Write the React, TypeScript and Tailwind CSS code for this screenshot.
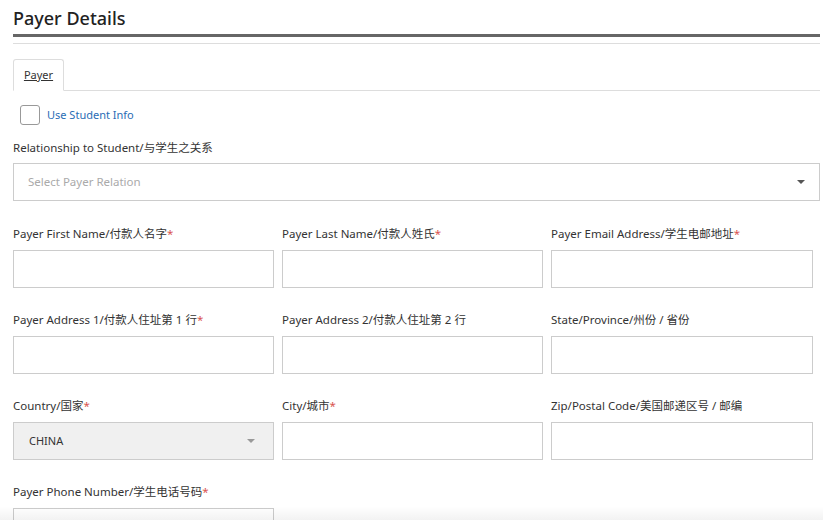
import React from "react";

const Req = () => <span className="text-[#d9534f]">*</span>;

function Field({ label, req, children }: { label: string; req?: boolean; children?: React.ReactNode }) {
  return (
    <div className="flex flex-col">
      <div className="h-[16px] text-[11.5px] leading-[16px] text-[#333]">{label}{req && <Req />}</div>
      <div className="mt-[8px]">
        {children ?? <div className="h-[38px] border border-[#ccc] bg-white" />}
      </div>
    </div>
  );
}

export default function App() {
  return (
    <div className="w-[823px] h-[520px] overflow-hidden bg-white relative" style={{ fontFamily: '"Noto Sans", "Noto Sans CJK SC", sans-serif' }}>
      <div className="pl-[13px] pr-[3px]">
        <div className="pt-[6px] text-[18px] leading-[24px] text-[#222] font-medium">Payer Details</div>
        <div className="mt-[4px] h-[3px] bg-[#666]" />
        <div className="mt-[6px] h-px bg-[#ddd]" />
        <div className="mt-[15px] flex border-b border-[#ddd]">
          <div className="h-[32px] w-[51px] -mb-px border border-[#ddd] border-b-white bg-white rounded-t-[3px] flex items-center justify-center text-[11px] text-[#333] underline">Payer</div>
        </div>
        <div className="mt-[14px] ml-[7px] flex items-center gap-[7px]">
          <div className="w-[20px] h-[20px] border border-[#999] rounded-[3px]" />
          <span className="text-[11px] text-[#2a6db5]">Use Student Info</span>
        </div>
        <div className="mt-[15px] text-[11.5px] leading-[16px] text-[#333]">Relationship to Student/与学生之关系</div>
        <div className="mt-[7px] h-[38px] border border-[#ccc] flex items-center justify-between px-[14px]">
          <span className="text-[11.5px] text-[#aaa]">Select Payer Relation</span>
          <span className="w-0 h-0 border-l-[4px] border-r-[4px] border-t-[4px] border-l-transparent border-r-transparent border-t-[#555]" />
        </div>
        <div className="mt-[25px] grid grid-cols-[261px_261px_262px] gap-x-[8px] gap-y-[24px]">
          <Field label="Payer First Name/付款人名字" req />
          <Field label="Payer Last Name/付款人姓氏" req />
          <Field label="Payer Email Address/学生电邮地址" req />
          <Field label="Payer Address 1/付款人住址第 1 行" req />
          <Field label="Payer Address 2/付款人住址第 2 行" />
          <Field label="State/Province/州份 / 省份" />
          <Field label="Country/国家" req>
            <div className="h-[38px] border border-[#ccc] bg-[#f0f0f0] flex items-center justify-between pl-[15px] pr-[18px]">
              <span className="text-[11px] text-[#333]">CHINA</span>
              <span className="w-0 h-0 border-l-[4px] border-r-[4px] border-t-[4px] border-l-transparent border-r-transparent border-t-[#999]" />
            </div>
          </Field>
          <Field label="City/城市" req />
          <Field label="Zip/Postal Code/美国邮递区号 / 邮编" />
          <Field label="Payer Phone Number/学生电话号码" req />
        </div>
      </div>
      <div className="absolute left-0 right-0 bottom-0 h-[14px] bg-gradient-to-b from-transparent to-[#0000000d]" />
    </div>
  );
}
